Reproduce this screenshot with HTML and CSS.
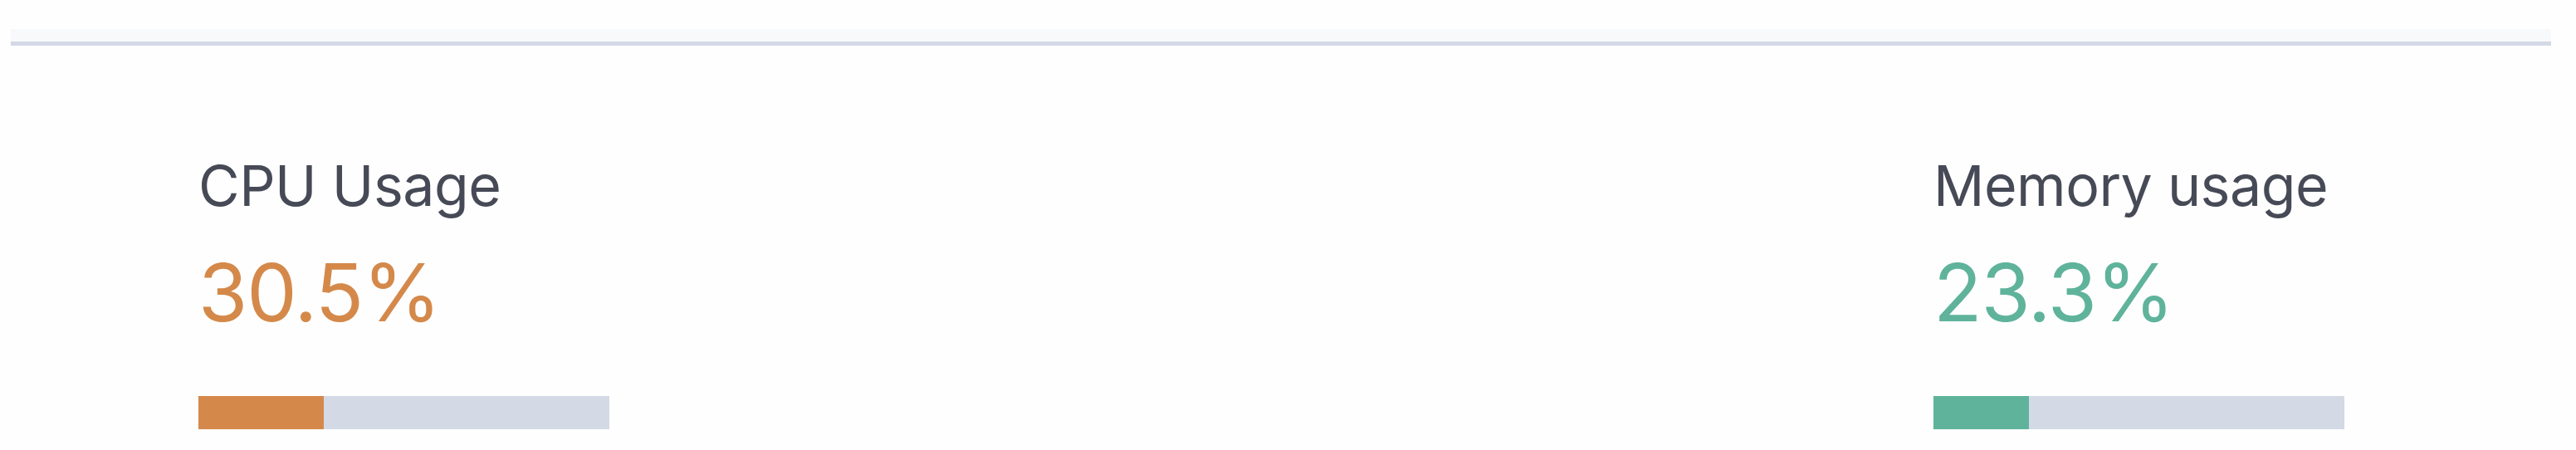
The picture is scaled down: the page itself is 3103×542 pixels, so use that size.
FILE: index.html
```html
<!DOCTYPE html>
<html>
<head>
  <title>Server Stats</title>
  <link rel="stylesheet" href="styles.css">
</head>
<body>
  <div class="panel">
    <div class="panel-header"></div>

    <div class="stats">
      <div class="stat">
        <div class="stat-label">CPU Usage</div>
        <div class="stat-value cpu">30.5%</div>
        <div class="bar">
          <div class="bar-fill cpu-fill" style="width: 30.5%"></div>
        </div>
      </div>

      <div class="stat">
        <div class="stat-label">Memory usage</div>
        <div class="stat-value mem">23.3%</div>
        <div class="bar">
          <div class="bar-fill mem-fill" style="width: 23.3%"></div>
        </div>
      </div>
    </div>
  </div>
</body>
</html>
```

FILE: styles.css
```css
body {
  background-color: #fefefe;
  font-family: Inter, 'Noto Sans', sans-serif;
  margin: 0;
}

.panel {
  margin: 35px 30px 0 13px;
}

.panel-header {
  height: 15px;
  background-color: #f8f9fb;
  border-bottom: 5px solid #d3d9e5;
}

.stats {
  display: flex;
  justify-content: space-between;
  padding: 126px 249px 0 226px;
}

.stat {
  width: 495px;
  flex-shrink: 0;
}

.stat-label {
  font-size: 68px;
  line-height: 84px;
  letter-spacing: -0.5px;
  white-space: nowrap;
  color: #464a56;
}

.stat-value {
  margin-top: 30px;
  font-size: 96px;
  line-height: 115px;
  letter-spacing: -1px;
  white-space: nowrap;
}

.cpu {
  color: #d4894a;
}

.mem {
  color: #5fb39b;
}

.bar {
  margin-top: 67px;
  height: 40px;
  background-color: #d3d9e5;
}

.bar-fill {
  height: 100%;
}

.cpu-fill {
  background-color: #d4894a;
}

.mem-fill {
  background-color: #5fb39b;
}
```
